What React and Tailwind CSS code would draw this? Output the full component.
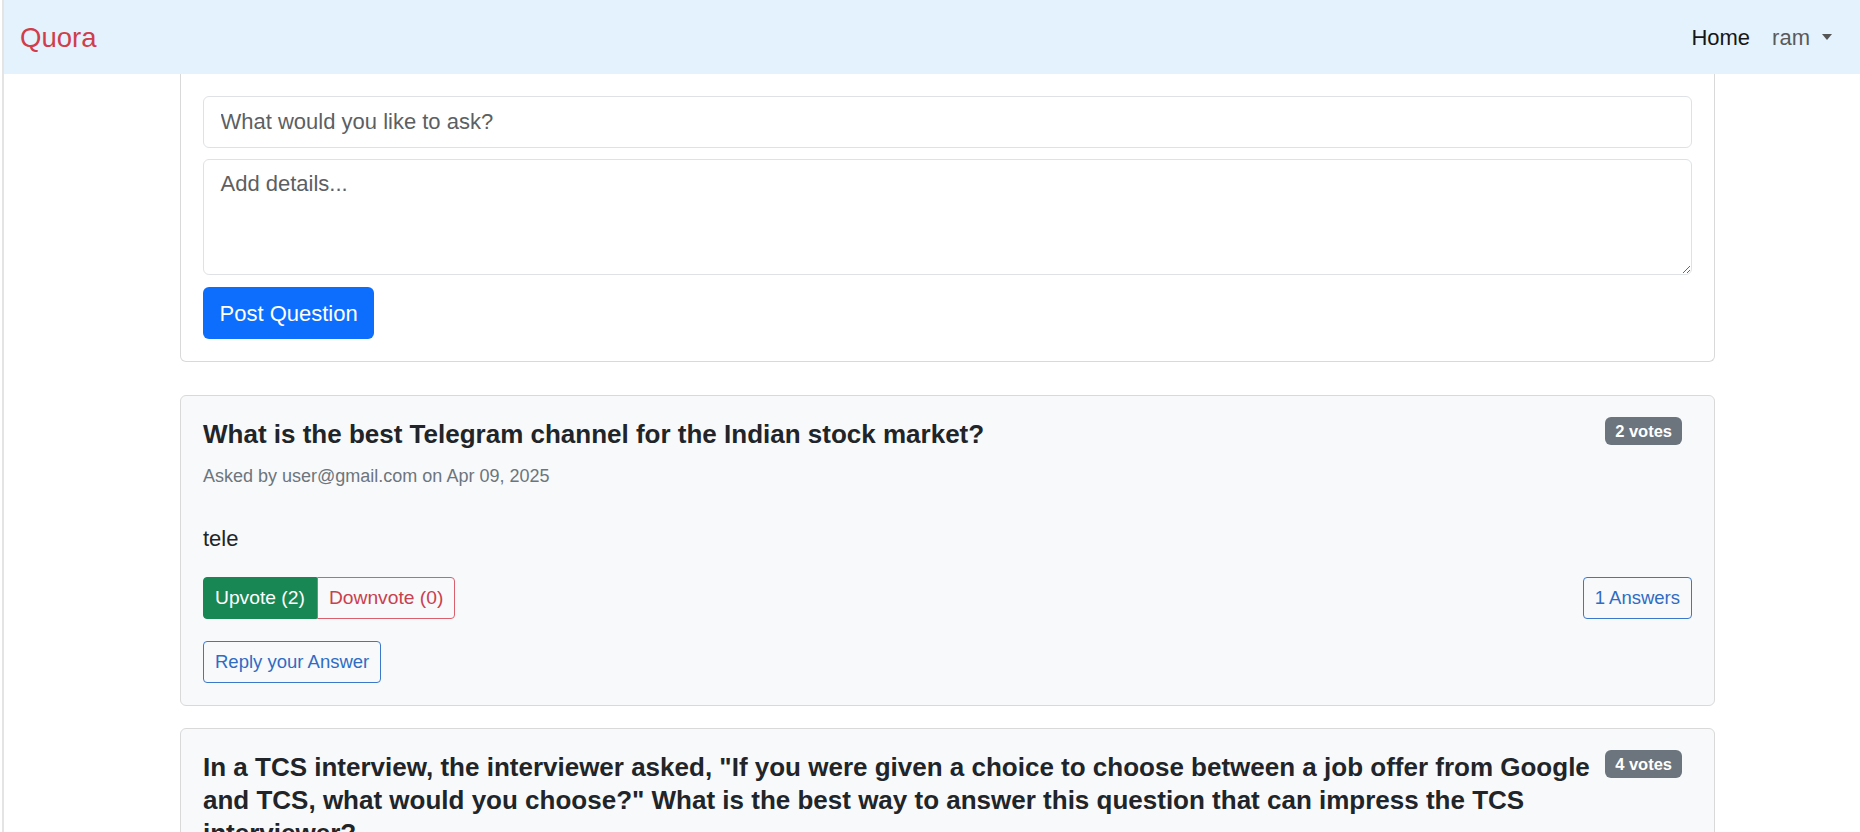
import { useState } from 'react';

const questions = [
    {
        id: 1,
        title: 'What is the best Telegram channel for the Indian stock market?',
        askedBy: 'user@gmail.com',
        date: 'Apr 09, 2025',
        body: 'tele',
        votes: 2,
        up: 2,
        down: 0,
        answers: 1,
    },
    {
        id: 2,
        title: 'In a TCS interview, the interviewer asked, "If you were given a choice to choose between a job offer from Google and TCS, what would you choose?" What is the best way to answer this question that can impress the TCS interviewer?',
        askedBy: 'user@gmail.com',
        date: 'Apr 09, 2025',
        body: 'tcs',
        votes: 4,
        up: 4,
        down: 0,
        answers: 2,
    },
];

function QuestionCard({ q }) {
    return (
        <div className="relative mb-[22px] rounded-[6px] border border-[#d9d9d9] bg-[#f8f9fa] p-[22px]">
            {/* votes badge */}
            <span className="absolute top-[21px] right-[32px] rounded-[6px] bg-[#6c757d] px-[10px] py-[4px] text-[16.5px] font-bold leading-[20px] text-white">
                {q.votes} votes
            </span>
            <h5 className="mb-[11px] pr-[88px] text-[26px] font-bold leading-[33px] text-[#212529]">{q.title}</h5>
            <p className="mb-[31px] text-[18px] leading-[29px] text-[#6c757d]">
                Asked by {q.askedBy} on {q.date}
            </p>
            <p className="mb-[22px] text-[22px] leading-[33px] text-[#212529]">{q.body}</p>

            <div className="flex items-center justify-between">
                <div className="flex">
                    <button className="flex h-[42px] items-center rounded-l-[4px] border border-[#198754] bg-[#198754] px-[11px] text-[19.25px] text-white">
                        Upvote ({q.up})
                    </button>
                    <button className="flex h-[42px] items-center rounded-r-[4px] border border-[#d9606c] px-[11px] text-[19.25px] text-[#c9404e]">
                        Downvote ({q.down})
                    </button>
                </div>
                <button className="flex h-[42px] items-center rounded-[4px] border border-[#3b78cc] px-[11px] text-[18.5px] text-[#2f6cc4]">
                    {q.answers} Answers
                </button>
            </div>

            <button className="mt-[22px] flex h-[42px] items-center rounded-[4px] border border-[#3b78cc] px-[11px] text-[18.5px] text-[#2f6cc4]">
                Reply your Answer
            </button>
        </div>
    );
}

export default function App() {
    const [title, setTitle] = useState('');
    const [details, setDetails] = useState('');

    return (
        <div className="min-h-screen bg-white pl-[2px] font-['Liberation_Sans',Arial,sans-serif]">
            <div className="min-h-screen border-l-2 border-[#e4e4e4]">
                <nav className="flex h-[74px] items-center justify-between bg-[#e3f2fd] pl-[16px] pr-[17px]">
                    <a className="text-[27.5px] leading-[33px] text-[#d03d4b]">Quora</a>
                    <div className="flex items-center text-[22px] leading-[33px]">
                        <a className="px-[11px] text-[#161616]">Home</a>
                        <button className="flex items-center px-[11px] text-[#5a5a5a]">
                            ram
                            <span className="ml-[12px] h-0 w-0 border-x-[5px] border-t-[6px] border-x-transparent border-t-[#555]" />
                        </button>
                    </div>
                </nav>

                <main className="ml-[176px] w-[1535px]">
                    <div className="mb-[33px] rounded-b-[6px] border border-t-0 border-[#d9d9d9] bg-white p-[22px]">
                        <input
                            type="text"
                            value={title}
                            onChange={(e) => setTitle(e.target.value)}
                            placeholder="What would you like to ask?"
                            className="mb-[11px] block h-[52px] w-full rounded-[6px] border border-[#dee2e6] px-[16.5px] text-[22px] text-[#212529] outline-none placeholder:text-[#5c5f63]"
                        />
                        <textarea
                            value={details}
                            onChange={(e) => setDetails(e.target.value)}
                            placeholder="Add details..."
                            className="mb-[12px] block h-[116px] w-full rounded-[6px] border border-[#dee2e6] px-[16.5px] py-[7px] text-[22px] leading-[33px] text-[#212529] outline-none placeholder:text-[#5c5f63]"
                        />
                        <button className="h-[52px] rounded-[6px] bg-[#0d6efd] px-[16.5px] text-[22px] text-white">
                            Post Question
                        </button>
                    </div>

                    {questions.map((q) => (
                        <QuestionCard key={q.id} q={q} />
                    ))}
                </main>
            </div>
        </div>
    );
}
